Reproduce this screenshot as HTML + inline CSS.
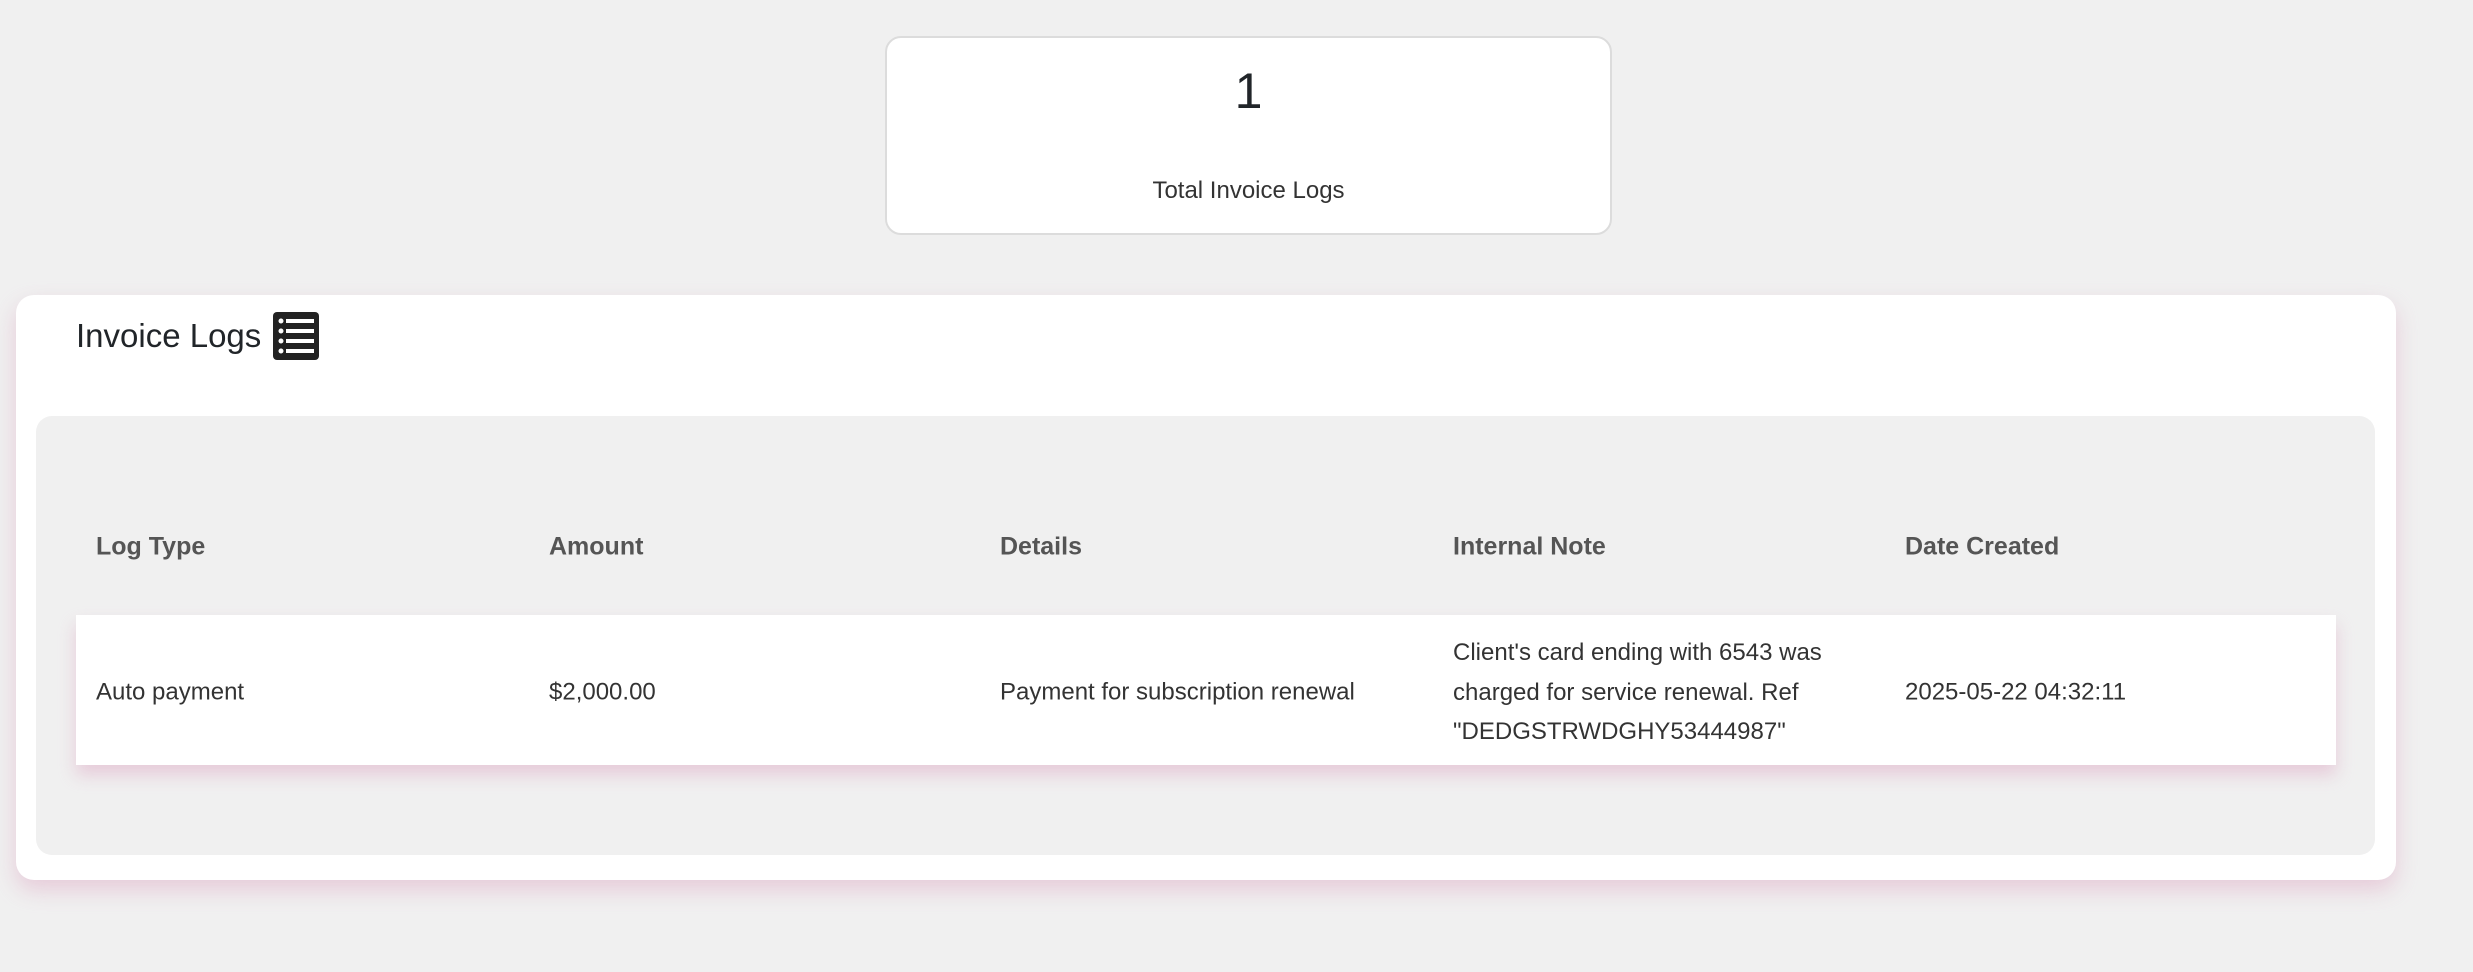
<!DOCTYPE html>
<html><head><meta charset="utf-8"><style>
*{box-sizing:border-box;margin:0;padding:0}
body{width:2473px;height:972px;background:#f0f0f0;font-family:"Liberation Sans",sans-serif;color:#212529;position:relative;overflow:hidden}
.stat{position:absolute;left:885px;top:36px;width:727px;height:199px;background:#fff;border:2px solid #dcdcdc;border-radius:16px;text-align:center}
.stat .n{position:absolute;top:53px;left:0;right:0;font-size:50px;line-height:50px;transform:translateY(-50%);font-weight:500}
.stat .l{position:absolute;top:153px;left:0;right:0;font-size:24px;line-height:30px;transform:translateY(-50%);color:#333}
.card{position:absolute;left:16px;top:295px;width:2380px;height:585px;background:#fff;border-radius:18px;box-shadow:0 10px 22px rgba(220,160,190,.45)}
.title{position:absolute;left:60px;top:17px;font-size:33px;display:flex;align-items:center;gap:12px}
.inner{position:absolute;left:20px;top:121px;width:2339px;height:439px;background:#f0f0f0;border-radius:16px}
.th{position:absolute;top:409px;font-size:25px;font-weight:bold;color:#555;transform:translateY(-50%)}
.row{position:absolute;left:76px;top:615px;width:2260px;height:150px;background:#fff;box-shadow:0 10px 16px rgba(220,160,190,.45)}
.td{position:absolute;font-size:24px;color:#333;transform:translateY(-50%);line-height:39.5px}
</style></head><body>
<div class="stat"><div class="n">1</div><div class="l">Total Invoice Logs</div></div>
<div class="card">
<div class="title">Invoice Logs
<svg width="46" height="48" viewBox="0 0 46 48"><rect x="0" y="0" width="46" height="48" rx="4" fill="#222"/>
<g fill="#fff"><circle cx="8" cy="9" r="2.5"/><circle cx="8" cy="19" r="2.5"/><circle cx="8" cy="29" r="2.5"/><circle cx="8" cy="39" r="2.5"/>
<rect x="13" y="7" width="28" height="4"/><rect x="13" y="17" width="28" height="4"/><rect x="13" y="27" width="28" height="4"/><rect x="13" y="37" width="28" height="4"/></g></svg></div>
<div class="inner"></div>
</div>
<div class="th" style="left:96px;top:547px">Log Type</div>
<div class="th" style="left:549px;top:547px">Amount</div>
<div class="th" style="left:1000px;top:547px">Details</div>
<div class="th" style="left:1453px;top:547px">Internal Note</div>
<div class="th" style="left:1905px;top:547px">Date Created</div>
<div class="row"></div>
<div class="td" style="left:96px;top:692px">Auto payment</div>
<div class="td" style="left:549px;top:692px">$2,000.00</div>
<div class="td" style="left:1000px;top:692px">Payment for subscription renewal</div>
<div class="td" style="left:1453px;top:692px;width:420px">Client's card ending with 6543 was charged for service renewal. Ref "DEDGSTRWDGHY53444987"</div>
<div class="td" style="left:1905px;top:692px">2025-05-22 04:32:11</div>
</body></html>
